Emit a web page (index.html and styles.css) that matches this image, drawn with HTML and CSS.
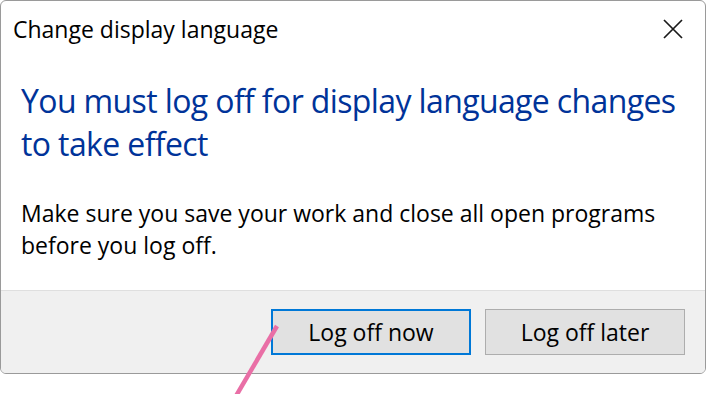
FILE: index.html
```html
<!doctype html>
<html lang="en">
<head>
    <meta charset="UTF-8">
    <title>Change display language</title>
    <link rel="stylesheet" href="styles.css">
</head>
<body>
    <div class="dialog">
        <div class="dialog-title">
            <span class="title-text">Change display language</span>
            <span class="close-btn">
                <svg width="20" height="20" viewBox="0 0 20 20">
                    <path d="M1 1 L19 19 M19 1 L1 19" stroke="#1a1a1a" stroke-width="1.7" fill="none"/>
                </svg>
            </span>
        </div>
        <div class="dialog-main">
            <h1 class="main-instruction">You must log off for display language changes<br>to take effect</h1>
            <p class="main-text">Make sure you save your work and close all open programs<br>before you log off.</p>
        </div>
        <div class="dialog-footer">
            <button class="btn btn-default">Log off now</button>
            <button class="btn">Log off later</button>
        </div>
    </div>

    <svg class="pointer" width="706" height="394" viewBox="0 0 706 394">
        <line x1="277" y1="326" x2="236" y2="396" stroke="#e96fa6" stroke-width="4.5"/>
    </svg>
</body>
</html>
```

FILE: styles.css
```css
*{
    padding: 0;
    margin: 0;
    box-sizing: border-box;
}
body{
    width: 706px;
    height: 394px;
    background: #fff;
    font-family: "Open Sans", "Noto Sans", sans-serif;
    color: #000;
    position: relative;
    overflow: hidden;
}
.dialog{
    width: 706px;
    height: 374px;
    border: 1px solid #9a9a9a;
    border-radius: 6px;
    background: #fff;
    display: flex;
    flex-direction: column;
    overflow: hidden;
}
.dialog-title{
    height: 56px;
    display: flex;
    align-items: center;
    justify-content: space-between;
    padding: 0 22px 0 12px;
}
.title-text{
    font-size: 23px;
    margin-top: -1px;
}
.close-btn{
    display: flex;
    width: 20px;
    height: 20px;
    margin-top: -1px;
}
.dialog-main{
    flex: 1;
    padding: 22px 0 0 20px;
}
.main-instruction{
    font-weight: normal;
    font-size: 32px;
    letter-spacing: -0.62px;
    line-height: 43px;
    color: #003399;
}
.main-text{
    margin-top: 32px;
    font-size: 23px;
    line-height: 32px;
}
.dialog-footer{
    height: 83px;
    border-top: 1px solid #dfdfdf;
    background: #f0f0f0;
    display: flex;
    justify-content: flex-end;
    align-items: flex-start;
    gap: 14px;
    padding: 18px 20px 0 0;
}
.btn{
    width: 200px;
    height: 46px;
    border: 1px solid #adadad;
    background: #e1e1e1;
    font-family: inherit;
    font-size: 23px;
    color: #000;
}
.btn-default{
    border: 2px solid #0078d7;
}
.pointer{
    position: absolute;
    left: 0;
    top: 0;
    pointer-events: none;
}
```
